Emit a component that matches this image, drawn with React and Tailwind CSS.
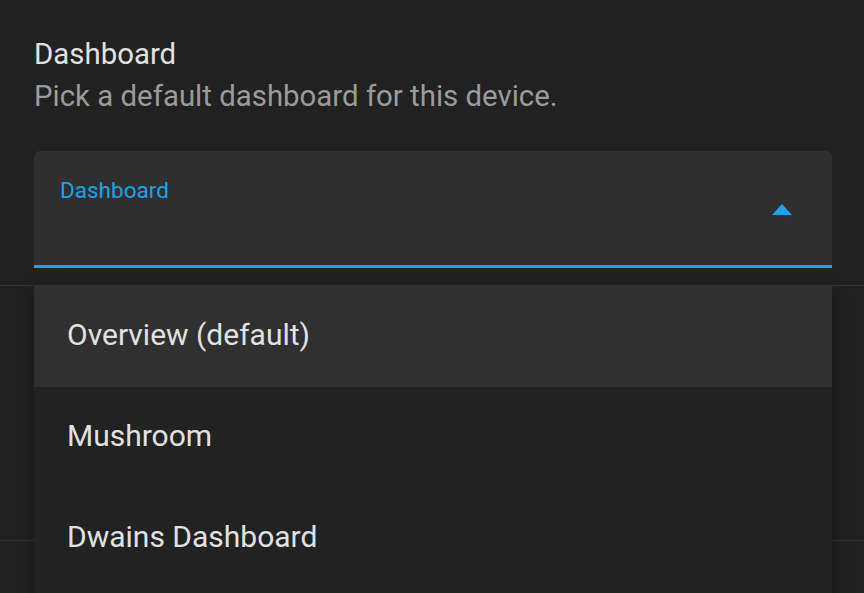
import React from 'react';

const options = ['Overview (default)', 'Mushroom', 'Dwains Dashboard'];

const App = () => {
  return (
    <div
      className="relative h-[593px] w-full overflow-hidden bg-[#212121]"
      style={{ fontFamily: 'Roboto, "Noto Sans", sans-serif' }}
    >
      {/* settings row */}
      <div className="pl-[34px] pr-[32px] pt-[33px]">
        <div className="text-[29.4px] leading-[42px] text-[#e1e1e1]">Dashboard</div>
        <div className="text-[29.4px] leading-[42px] text-[#9b9b9b]">
          Pick a default dashboard for this device.
        </div>

        <div className="mt-[34px] flex h-[117px] items-center justify-between rounded-t-[6px] border-b-[3px] border-[#1aa3e8] bg-[#2f2f2f]">
          <div className="self-start pl-[26px] pt-[26px] text-[22.5px] leading-[26px] text-[#1aa3e8]">
            Dashboard
          </div>
          <svg width="20" height="11" viewBox="0 0 20 11" className="mr-[40px] mt-[2px]">
            <path d="M0 11 L10 0 L20 11 Z" fill="#1aa3e8" />
          </svg>
        </div>
      </div>

      {/* rows behind the menu */}
      <div className="mt-[17px] h-[256px] border-y border-[#353535]" />

      {/* dropdown menu */}
      <div className="absolute left-[34px] right-[32px] top-[286px] h-[330px] bg-[#222222] shadow-[0_6px_16px_rgba(0,0,0,0.35)]">
        {options.map((opt, i) => (
          <div
            key={opt}
            className={`flex h-[101px] items-center pb-[4px] pl-[33px] text-[30px] text-[#e1e1e1] ${
              i === 0 ? 'bg-[#303030]' : ''
            }`}
          >
            {opt}
          </div>
        ))}
      </div>
    </div>
  );
};

export default App;
